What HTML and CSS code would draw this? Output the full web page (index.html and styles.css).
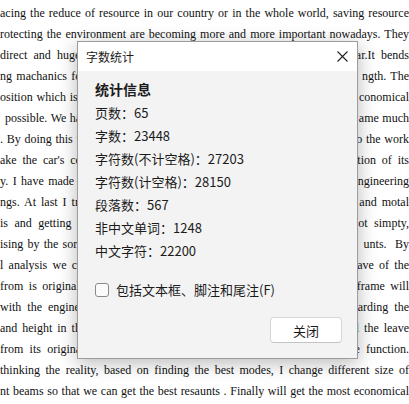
FILE: index.html
```html
<!DOCTYPE html>
<html lang="zh-CN">
<head>
<meta charset="utf-8">
<title>字数统计</title>
<link rel="stylesheet" href="styles.css">
</head>
<body>
<div class="doc">
  <div class="ln">acing the reduce of resource in our country or in the whole world, saving resource</div>
  <div class="ln">rotecting the environment are becoming more and more important nowadays. They</div>
  <div class="ln">direct and huge<span class="under"> influence on the structure and the strength of the c</span>ar.It bends</div>
  <div class="ln">ng machanics fo<span class="under">r the frame and all the beams so as to get their best stre</span>ngth. The</div>
  <div class="ln">osition which is v<span class="under">ery important to make the frame and the beams more e</span>conomical</div>
  <div class="ln ind">possible. We ha<span class="under">ve tried our best to make the weight of the whole steel fr</span>ame much</div>
  <div class="ln">. By doing this w<span class="under">e can reduce the material that is used and save money t</span>o the work</div>
  <div class="ln">ake the car's cor<span class="under">nering better and improve the safety and the applic</span>ation of its</div>
  <div class="ln">y. I have made t<span class="under">he calculation of the frame and beams, in the way of e</span>ngineering</div>
  <div class="ln">ngs. At last I try<span class="under"> to find out the best way of the distribution of stress</span> and motal</div>
  <div class="ln">is and getting b<span class="under">est results of the whole frame and the beams are n</span>ot simpty,</div>
  <div class="ln">ising by the sort<span class="under"> of the calculation of the whole stress and all of the amo</span>unts.&nbsp; By</div>
  <div class="ln">l analysis we ca<span class="under">n find out all the best shapes of the frame and the le</span>ave of the</div>
  <div class="ln">from is original<span class="under"> sizes, we change the size and also the shape of the</span> frame will</div>
  <div class="ln">with the engine<span class="under"> and we consider all the safety and the strengths reg</span>arding the</div>
  <div class="ln">and height in th<span class="under">e frame and the beams, we can change it and finds al</span>l the leave</div>
  <div class="ln">from its original<span class="under"> value, we can get the many different results of th</span>e function.</div>
  <div class="ln">thinking the reality, based on finding the best modes, I change different size of</div>
  <div class="ln">nt beams so that we can get the best resaunts . Finally will get the most economical</div>
</div>

<div class="dialog" role="dialog" aria-label="字数统计">
  <div class="dlg-head">
    <span class="dlg-title">字数统计</span>
    <button class="dlg-close" aria-label="关闭">
      <svg width="11" height="11" viewBox="0 0 11 11"><path d="M0.5 0.5 L10.5 10.5 M10.5 0.5 L0.5 10.5" stroke="#222" stroke-width="1.1" fill="none"/></svg>
    </button>
  </div>
  <div class="dlg-body">
    <div class="stats">
      <div class="row heading">统计信息</div>
      <div class="row">页数：65</div>
      <div class="row">字数：23448</div>
      <div class="row">字符数(不计空格)：27203</div>
      <div class="row">字符数(计空格)：28150</div>
      <div class="row">段落数：567</div>
      <div class="row">非中文单词：1248</div>
      <div class="row">中文字符：22200</div>
    </div>
    <label class="check"><span class="box"></span><span>包括文本框、脚注和尾注(F)</span></label>
    <div class="actions"><button class="btn">关闭</button></div>
  </div>
</div>
</body>
</html>
```
FILE: styles.css
```css
html, body {
  margin: 0;
  padding: 0;
  background: #fff;
  overflow: hidden;
}
body {
  width: 409px;
  height: 404px;
  position: relative;
}
.doc {
  width: 409px;
  padding-top: 3px;
  font-family: "Liberation Serif", "Times New Roman", serif;
  font-size: 12px;
  line-height: 21px;
  color: #111;
}
.ln {
  height: 21px;
  overflow: hidden;
  text-align: justify;
  text-align-last: justify;
}
.ind {
  text-indent: 5px;
}
.under {
  visibility: hidden;
}
.dialog {
  position: absolute;
  left: 77px;
  top: 41px;
  width: 279px;
  height: 316px;
  border: 1px solid #9c9c9c;
  background: #f3f3f3;
  box-shadow: 0 4px 18px rgba(0, 0, 0, 0.28);
  font-family: "Noto Sans CJK SC", "Noto Sans", sans-serif;
  color: #1b1b1b;
  display: flex;
  flex-direction: column;
}
.dlg-head {
  height: 29px;
  background: #fff;
  display: flex;
  align-items: center;
  justify-content: space-between;
  padding: 0 9px 0 8px;
}
.dlg-title {
  font-size: 12px;
  line-height: 16px;
}
.dlg-close {
  border: 0;
  background: none;
  padding: 0;
  width: 11px;
  height: 11px;
  display: block;
}
.dlg-close svg { display: block; }
.dlg-body {
  flex: 1;
  padding: 7px 15px 15px 17px;
  display: flex;
  flex-direction: column;
}
.row {
  font-size: 13px;
  line-height: 23px;
  height: 23px;
}
.heading {
  font-size: 14px;
  font-weight: bold;
}
.check {
  margin-top: 18px;
  display: flex;
  align-items: center;
  gap: 7px;
  font-size: 13px;
  line-height: 20px;
}
.box {
  width: 12px;
  height: 12px;
  border: 1px solid #8a8a8a;
  border-radius: 3px;
  background: #fbfbfb;
}
.actions {
  margin-top: auto;
  display: flex;
  justify-content: flex-end;
}
.btn {
  width: 72px;
  height: 26px;
  border: 1px solid #d6d6d6;
  border-bottom-color: #c4c4c4;
  border-radius: 4px;
  background: #fff;
  font-family: "Noto Sans CJK SC", "Noto Sans", sans-serif;
  font-size: 13px;
  color: #1b1b1b;
  padding: 0;
}
```
